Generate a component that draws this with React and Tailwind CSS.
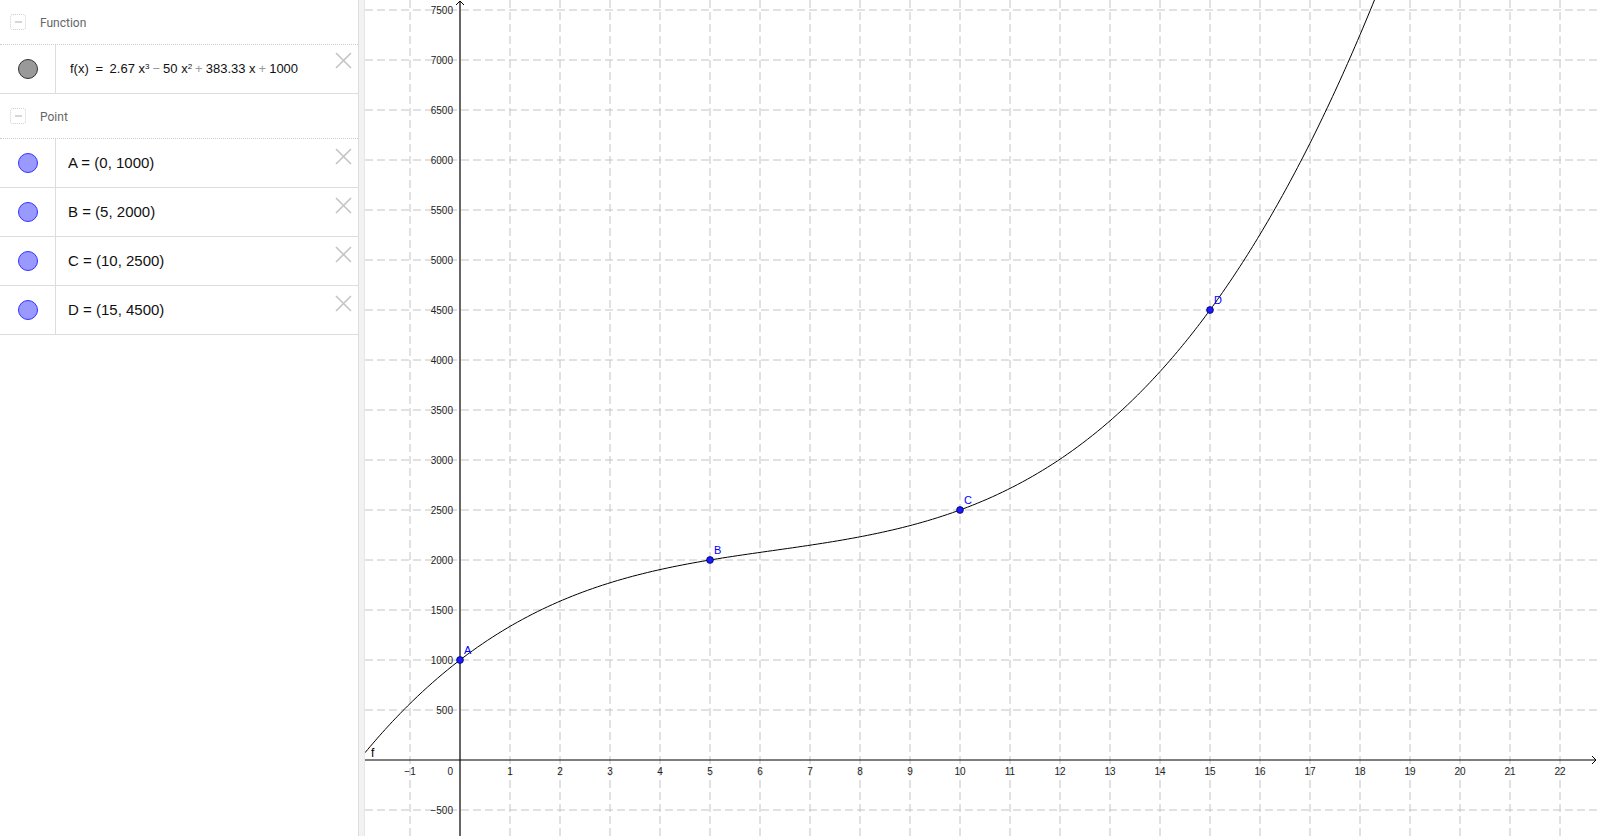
import React from 'react';

const OX = 95;
const OY = 760;
const UX = 50;
const UY = 0.1;

const f = (x) => (8 / 3) * x ** 3 - 50 * x ** 2 + (1150 / 3) * x + 1000;

const curvePath = () => {
  const pts = [];
  for (let x = -1.9; x <= 18.6; x += 0.05) {
    const px = OX + x * UX;
    const py = OY - f(x) * UY;
    pts.push(`${px.toFixed(2)},${py.toFixed(2)}`);
    if (py < -5) break;
  }
  return 'M' + pts.join(' L');
};

const points = [
  { name: 'A', x: 0, y: 1000 },
  { name: 'B', x: 5, y: 2000 },
  { name: 'C', x: 10, y: 2500 },
  { name: 'D', x: 15, y: 4500 },
];

const fmt = (n) => (n < 0 ? '\u2212' + Math.abs(n) : String(n));

const CloseIcon = () => (
  <svg width="17" height="17" viewBox="0 0 17 17" className="shrink-0">
    <path d="M1 1 L16 16 M16 1 L1 16" stroke="#c4c4c4" strokeWidth="1.6" fill="none" />
  </svg>
);

const CollapseIcon = () => (
  <div className="w-[16px] h-[16px] rounded-[3px] border border-dotted border-[#cfcfcf] flex items-center justify-center">
    <div className="w-[7px] h-[2px] bg-[#d6d6d6]" />
  </div>
);

const Header = ({ label, h }) => (
  <div className={`${h} flex items-center pl-[10px] border-b border-dotted border-[#cccccc]`}>
    <CollapseIcon />
    <span className="ml-[14px] mt-[2px] text-[12px] text-[#666666]" style={{ fontFamily: 'Roboto, "Liberation Sans", sans-serif' }}>
      {label}
    </span>
  </div>
);

const Row = ({ dot, children, closeTop }) => (
  <div className="h-[49px] flex border-b border-[#dddddd]">
    <div className="w-[56px] shrink-0 border-r border-[#dddddd] flex items-center justify-center pl-[1px]">
      {dot}
    </div>
    <div className="flex-1 flex items-center">{children}</div>
    <div className={`pr-[6px] ${closeTop}`}>
      <CloseIcon />
    </div>
  </div>
);

const GrayDot = () => <div className="w-[20px] h-[20px] rounded-full bg-[#999999] border-[1.5px] border-[#333333]" />;
const BlueDot = () => <div className="w-[20px] h-[20px] rounded-full bg-[#9999ff] border-[1.5px] border-[#3333ff]" />;

const Op = ({ children }) => <span className="text-[#9a9a9a] mx-[3px]">{children}</span>;

const AlgebraPanel = () => (
  <div className="w-[359px] shrink-0 h-full bg-white border-r border-[#dddddd]">
    <Header label="Function" h="h-[45px]" />
    <Row dot={<GrayDot />} closeTop="pt-[7px]">
      <span
        className="ml-[14px] text-[13px] text-[#111111] whitespace-nowrap"
        style={{ fontFamily: '"Liberation Sans", Arial, sans-serif' }}
      >
        f(x) <span className="mx-[3px]">=</span> 2.67 x<sup className="text-[8px]">3</sup>
        <Op>&minus;</Op>50 x<sup className="text-[8px]">2</sup>
        <Op>+</Op>383.33 x<Op>+</Op>1000
      </span>
    </Row>
    <Header label="Point" h="h-[45px]" />
    {points.map((p) => (
      <Row key={p.name} dot={<BlueDot />} closeTop="pt-[9px]">
        <span
          className="ml-[12px] text-[15px] text-[#111111] whitespace-nowrap"
          style={{ fontFamily: '"Liberation Sans", Arial, sans-serif' }}
        >
          {p.name} = ({p.x}, {p.y})
        </span>
      </Row>
    ))}
  </div>
);

const Graph = () => {
  const W = 1235;
  const H = 836;
  const vx = [];
  for (let k = -1; k <= 22; k++) vx.push(k);
  const hy = [];
  for (let j = -1; j <= 15; j++) hy.push(j * 500);

  return (
    <div className="flex-1 h-full bg-white overflow-hidden">
      <svg width={W} height={H} viewBox={`0 0 ${W} ${H}`} style={{ fontFamily: '"Liberation Sans", Arial, sans-serif' }}>
        {vx.map((k) =>
          k === 0 ? null : (
            <line key={'v' + k} x1={OX + k * UX} y1="0" x2={OX + k * UX} y2={H} stroke="#c4c4c4" strokeWidth="1" strokeDasharray="8 4" />
          )
        )}
        {hy.map((v) =>
          v === 0 ? null : (
            <line key={'h' + v} x1="0" y1={OY - v * UY} x2={W} y2={OY - v * UY} stroke="#c4c4c4" strokeWidth="1" strokeDasharray="8 4" />
          )
        )}

        <line x1="0" y1={OY} x2={W - 4} y2={OY} stroke="#000" strokeWidth="1.2" />
        <path d={`M${W - 8} ${OY - 4} L${W - 4} ${OY} L${W - 8} ${OY + 4}`} stroke="#000" strokeWidth="1" fill="none" />
        <line x1={OX} y1={H} x2={OX} y2="1" stroke="#000" strokeWidth="1.2" />
        <path d={`M${OX - 4} 5 L${OX} 1 L${OX + 4} 5`} stroke="#000" strokeWidth="1" fill="none" />

        {vx.map((k) =>
          k === 0 ? null : (
            <text key={'lx' + k} x={OX + k * UX} y={OY + 15} fontSize="10" textAnchor="middle" fill="#222">
              {fmt(k)}
            </text>
          )
        )}
        <text x={OX - 7} y={OY + 15} fontSize="10" textAnchor="end" fill="#222">
          0
        </text>
        {hy.map((v) =>
          v === 0 ? null : (
            <text key={'ly' + v} x={OX - 7} y={OY - v * UY + 3.5} fontSize="10" textAnchor="end" fill="#222">
              {fmt(v)}
            </text>
          )
        )}

        <path d={curvePath()} stroke="#000" strokeWidth="1" fill="none" />
        <text x="6" y="757" fontSize="12" fill="#000">
          f
        </text>

        {points.map((p) => {
          const px = OX + p.x * UX;
          const py = OY - p.y * UY;
          return (
            <g key={p.name}>
              <circle cx={px} cy={py} r="3.4" fill="#1a1aff" stroke="#000066" strokeWidth="0.8" />
              <text x={px + 4} y={py - 6} fontSize="11" fill="#0000ff">
                {p.name}
              </text>
            </g>
          );
        })}
      </svg>
    </div>
  );
};

const App = () => (
  <div className="w-full h-[836px] flex bg-white overflow-hidden">
    <AlgebraPanel />
    <div className="w-[6px] shrink-0 h-full bg-[#f2f2f2] border-r border-[#e6e6e6]" />
    <Graph />
  </div>
);

export default App;
